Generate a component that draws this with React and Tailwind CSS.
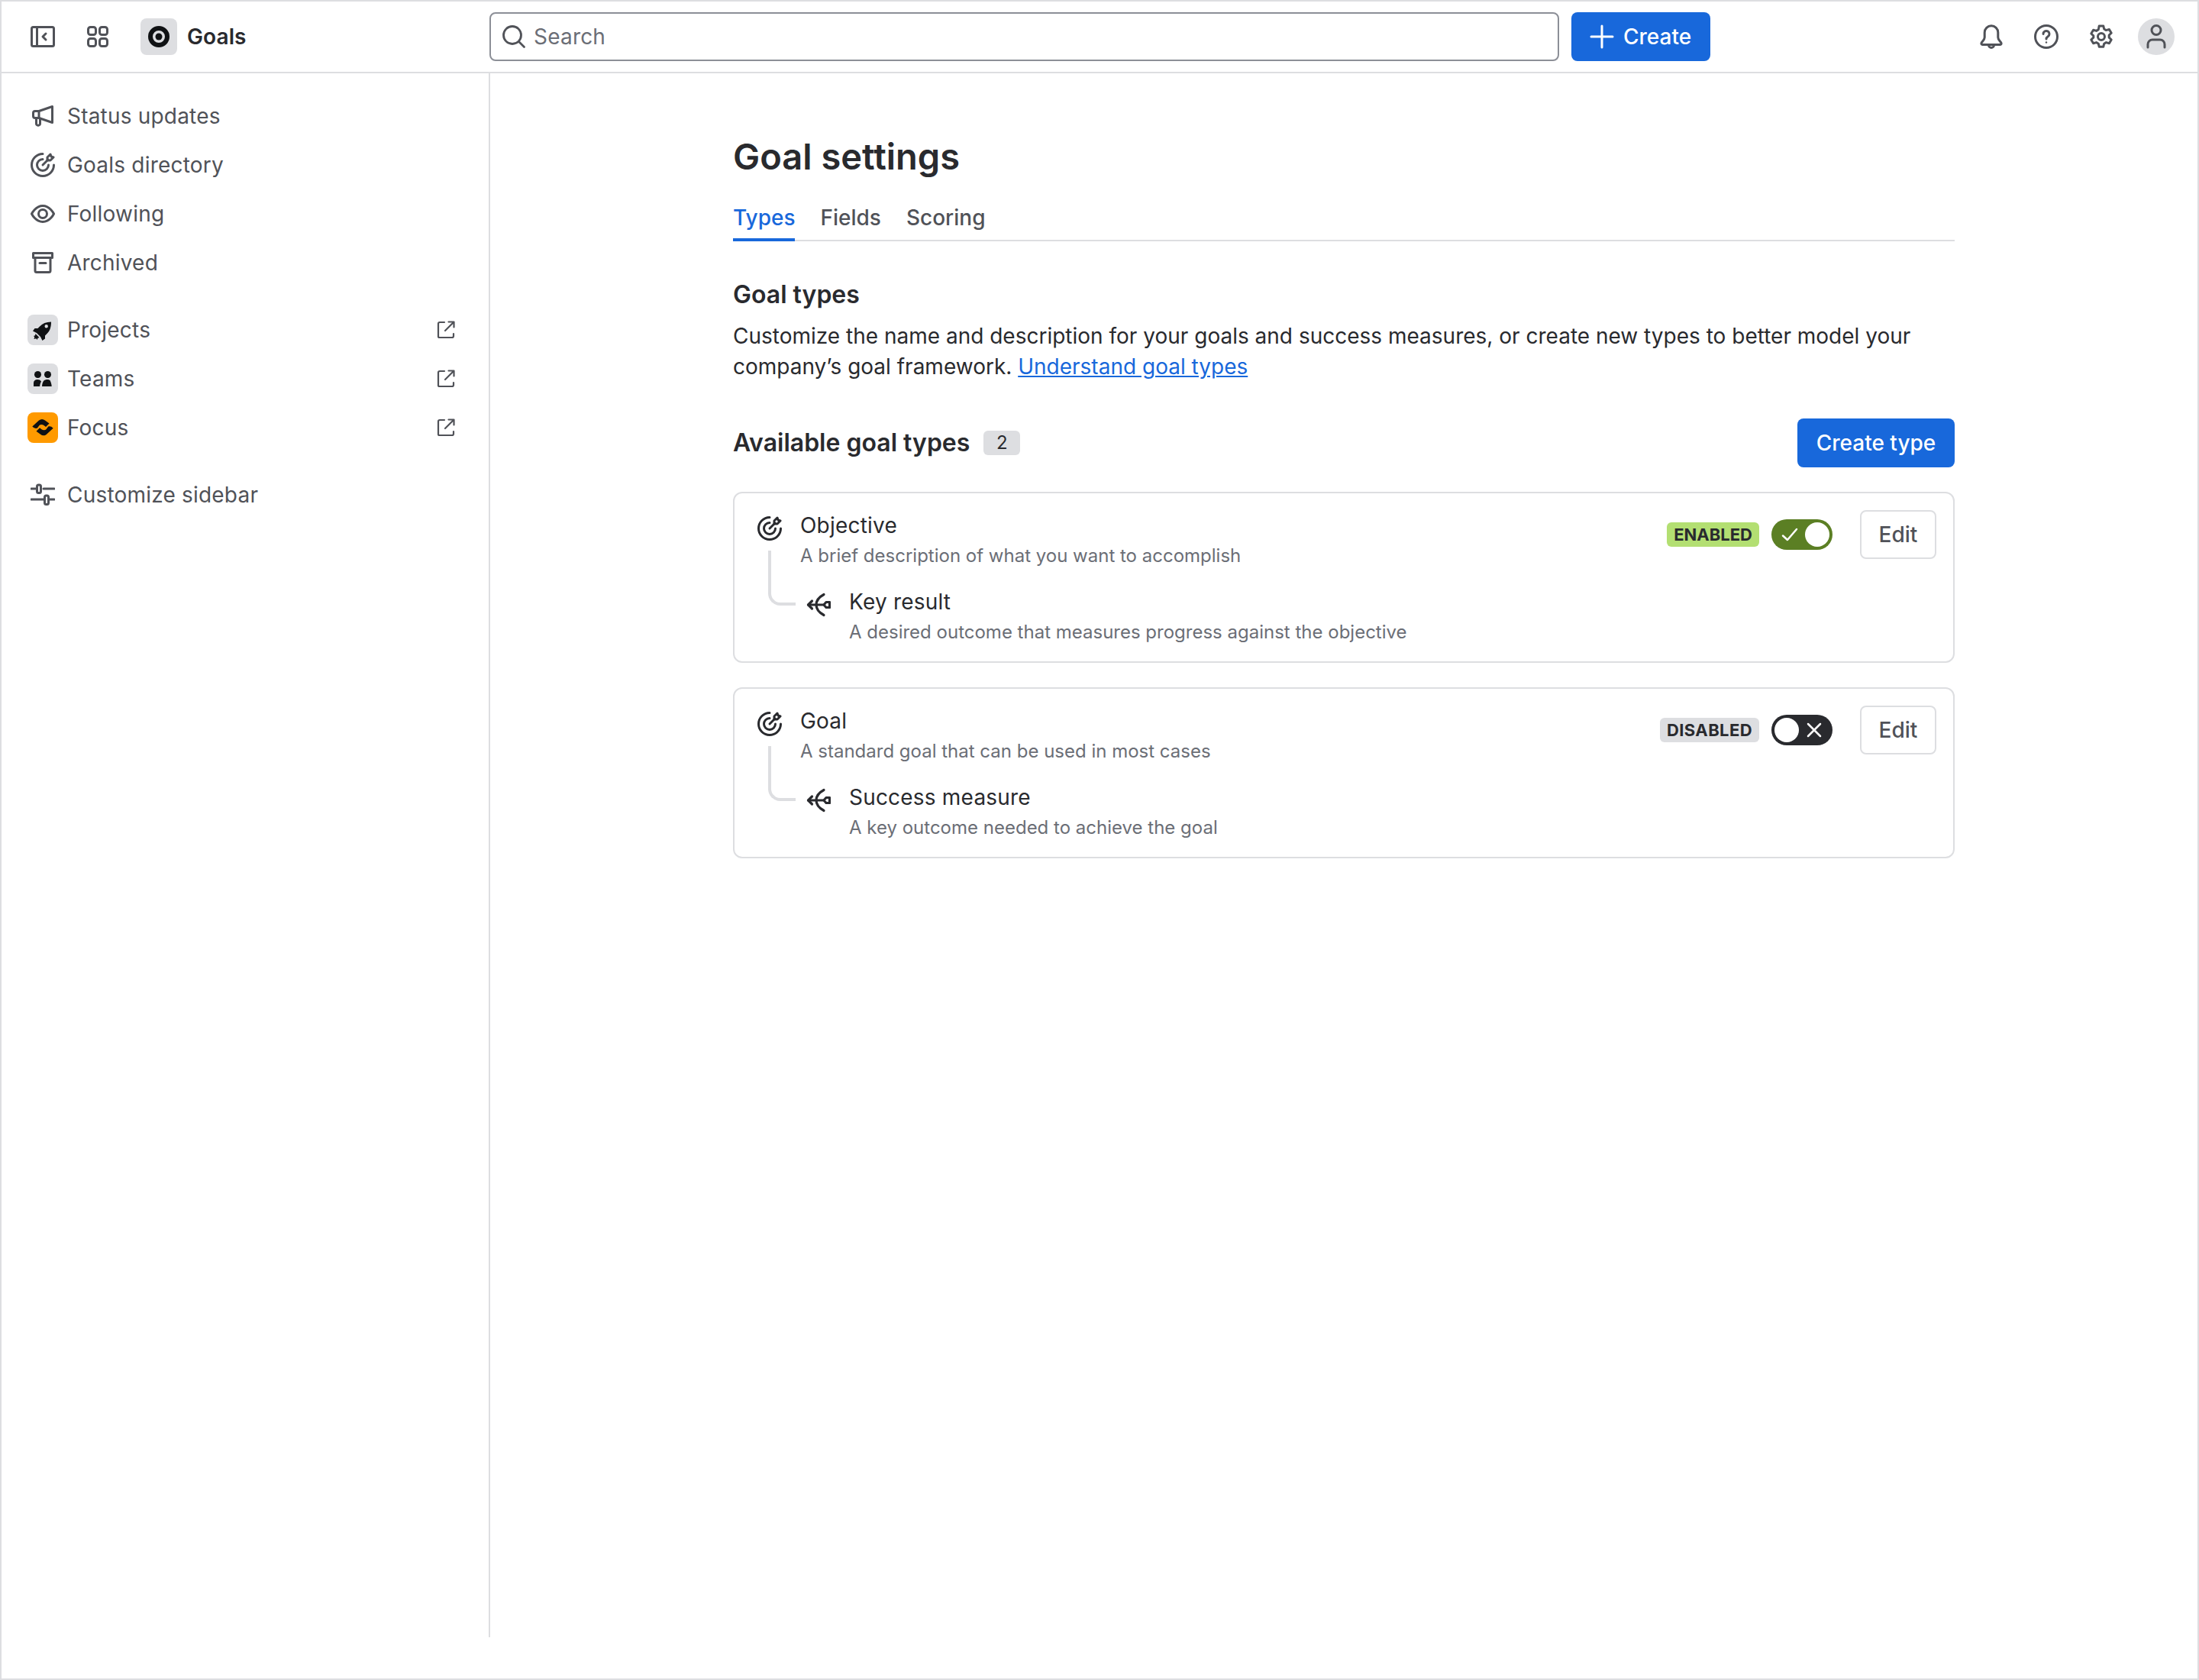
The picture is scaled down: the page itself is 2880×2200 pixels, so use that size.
import React from "react";

const Svg = ({ children, className = "w-8 h-8", box = "0 0 16 16", color = "#505258", sw = 1.5 }) => (
  <svg viewBox={box} className={`${className} shrink-0`} fill="none" stroke={color} strokeWidth={sw} strokeLinecap="round" strokeLinejoin="round">
    {children}
  </svg>
);

const PanelIcon = () => (
  <Svg>
    <rect x="0.75" y="1.75" width="14.5" height="12.5" rx="1" />
    <path d="M4.25 1.75v12.5" />
    <path d="M10 6 8 8l2 2" />
  </Svg>
);
const AppsIcon = () => (
  <Svg>
    <rect x="1.75" y="1.75" width="5" height="5" rx="1.5" />
    <rect x="9.25" y="1.75" width="5" height="5" rx="1.5" />
    <rect x="1.75" y="9.25" width="5" height="5" rx="1.5" />
    <rect x="9.25" y="9.25" width="5" height="5" rx="1.5" />
  </Svg>
);
const MegaphoneIcon = () => (
  <Svg>
    <path d="M14.25 1.75v10.5L5.5 9.25H3A1.25 1.25 0 0 1 1.75 8V6A1.25 1.25 0 0 1 3 4.75h2.5z" />
    <path d="M5.5 4.75v4.5" />
    <path d="M3.75 9.25V13a1.1 1.1 0 0 0 1.1 1.1h.3a1.1 1.1 0 0 0 1.1-1.1V9.6" />
  </Svg>
);
const TargetIcon = ({ color = "#505258" }) => (
  <Svg color={color}>
    <path d="M8 .75A7.25 7.25 0 1 0 15.25 8" />
    <path d="M8 4.25A3.75 3.75 0 1 0 11.75 8" />
    <path d="M8 8l3.5-3.5" />
    <path d="M11 5V3l2-2 .5 1.5L15 3l-2 2z" />
  </Svg>
);
const EyeIcon = () => (
  <Svg>
    <path d="M.75 8S3.25 2.75 8 2.75 15.25 8 15.25 8 12.75 13.25 8 13.25.75 8 .75 8z" />
    <circle cx="8" cy="8" r="2.75" />
  </Svg>
);
const ArchiveIcon = () => (
  <Svg>
    <path d="M1.75 1.75h12.5v3H1.75z" />
    <path d="M3 4.75v8.5a1 1 0 0 0 1 1h8a1 1 0 0 0 1-1v-8.5" />
    <path d="M6 8.25h4" />
  </Svg>
);
const SlidersIcon = () => (
  <Svg>
    <path d="M.5 4h3M8.5 4h7M.5 11h8M12.5 11h3" />
    <rect x="4.25" y="1.5" width="2.5" height="5.25" rx="1" />
    <rect x="9.25" y="8.5" width="2.5" height="5.75" rx="1" />
  </Svg>
);
const ExternalIcon = () => (
  <Svg className="w-6 h-6" box="0 0 12 12" sw={1.1}>
    <path d="M5 1H2a1 1 0 0 0-1 1v8.25a.75.75 0 0 0 .75.75H10a1 1 0 0 0 1-1V8.5" />
    <path d="M5.5 6.5 11 1M7.75.75h3.5v3.5" />
  </Svg>
);
const SearchIcon = () => (
  <Svg color="#505258" sw={1.4}>
    <circle cx="7" cy="7" r="5.75" />
    <path d="m11.25 11.25 3.5 3.5" />
  </Svg>
);
const BellIcon = () => (
  <Svg>
    <path d="M8 .9A4.4 4.4 0 0 0 3.6 5.3v3.2c0 1.6-1.6 2.6-2.1 3.7-.2.5.1 1 .6 1h11.8c.5 0 .8-.5.6-1-.5-1.1-2.1-2.1-2.1-3.7V5.3A4.4 4.4 0 0 0 8 .9z" />
    <path d="M6.25 13.5a1.75 1.75 0 0 0 3.5 0" />
  </Svg>
);
const HelpIcon = () => (
  <Svg>
    <circle cx="8" cy="8" r="7.25" />
    <path d="M6 6.25a2 2 0 1 1 3.1 1.65c-.7.45-1.1.85-1.1 1.6" />
    <circle cx="8" cy="11.75" r=".6" fill="#505258" stroke="none" />
  </Svg>
);
const GearIcon = () => (
  <Svg>
    <path d="M6.6 1h2.8l.45 2 1.35.8 2-.6 1.4 2.4-1.5 1.4v1.6l1.5 1.4-1.4 2.4-2-.6-1.35.8-.45 2H6.6l-.45-2-1.35-.8-2 .6-1.4-2.4 1.5-1.4V7.4L1.4 6l1.4-2.4 2 .6 1.35-.8z" />
    <circle cx="8" cy="8" r="2.25" />
  </Svg>
);
const PersonIcon = () => (
  <Svg>
    <circle cx="8" cy="3.75" r="3" />
    <path d="M2.5 15v-2a3 3 0 0 1 3-3h5a3 3 0 0 1 3 3v2" />
  </Svg>
);
const BowIcon = () => (
  <Svg color="#292A2E" sw={1.6}>
    <path d="M1.25 8h10.25" />
    <path d="M3.75 5.5 1.25 8l2.5 2.5" />
    <path d="M11.5 1.25C8.25 3 6.5 5.5 6.5 8s1.75 5 5 6.75" />
    <path d="M11.5 8 13 6.25h2.25v3.5H13z" />
  </Svg>
);

const GoalsLogo = () => (
  <svg viewBox="0 0 48 48" className="w-12 h-12">
    <circle cx="24" cy="24" r="11" fill="none" stroke="#101214" strokeWidth="6" />
    <circle cx="24" cy="24" r="4.5" fill="#101214" />
  </svg>
);
const RocketLogo = () => (
  <svg viewBox="0 0 40 40" className="w-10 h-10" fill="#101214">
    <path fillRule="evenodd" d="M31 9.500c-6.500 0-11.500 2-15 6L13.500 18H9.500L7 21.500l5 2.500 5 5 2.500 5L23 31.500v-4l2.500-2.500c4-3.500 5.500-9 5.500-15.500zM24.700 13a2.200 2.200 0 1 1 0 4.400 2.200 2.200 0 0 1 0-4.400z" />
    <path d="M10.500 25l5 5-2 .8-.8 2.200-1.500-1.700-2.700.7.7-2.700-1.200-1.300 2-.8z" />
  </svg>
);
const TeamsLogo = () => (
  <svg viewBox="0 0 40 40" className="w-10 h-10" fill="#101214">
    <circle cx="13.500" cy="14.500" r="4.500" />
    <circle cx="26.500" cy="14.500" r="4.500" />
    <path d="M8 30v-4.500C8 22.500 10 21 13 21c2.400 0 4 .8 5 2.500-1 1.800-1.700 4-1.900 6.500z" />
    <path d="M19 30c.2-3.500 1-6 2.500-7.500C22.500 21.500 24 21 26 21c1.800 0 3 .5 3.700 1.500.9 1.700 1.800 4.500 2 7.500z" />
  </svg>
);
const FOCUS_BAND = "M6.300 18.500 15 10.500c2.500-2 5.500-2 8 0l5.500 4-4.500 4.500-2.500-2c-2-1.500-4.500-1.500-6 0L13 20.500c-2 1-4.500 .2-6.700-2z";
const FocusLogo = () => (
  <svg viewBox="0 0 40 40" className="w-10 h-10" fill="#101214">
    <path d={FOCUS_BAND} />
    <path transform="rotate(180 20 19.600)" d={FOCUS_BAND} />
  </svg>
);

const NavRow = ({ icon, label, external, tile }) => (
  <div className="flex h-16 items-center pr-[38px]">
    <div className={`flex w-[86px] shrink-0 ${tile ? "pl-[34px]" : "pl-[38px]"}`}>
      {tile ? <div className={`h-10 w-10 rounded-lg overflow-hidden ${tile}`}>{icon}</div> : icon}
    </div>
    <span className="flex-1 text-[28px] leading-10 tracking-[0.2px] text-[#505258]">{label}</span>
    {external && <ExternalIcon />}
    {external && <span className="w-[6px]" />}
  </div>
);

const Connector = () => (
  <div className="-mt-[47px] h-[72px] w-9 shrink-0 rounded-bl-2xl border-b-4 border-l-4 border-[#DDDEE1]" />
);

const Toggle = ({ on }) => (
  <div className={`flex h-10 w-20 items-center justify-between rounded-full px-1 ${on ? "bg-[#5B7F24]" : "bg-[#292A2E]"}`}>
    {on ? (
      <>
        <svg viewBox="0 0 24 24" className="ml-[8px] h-6 w-6" fill="none" stroke="#fff" strokeWidth="2.5" strokeLinecap="round" strokeLinejoin="round">
          <path d="M3 13.5 9 19 21 5" />
        </svg>
        <span className="h-8 w-8 rounded-full bg-white" />
      </>
    ) : (
      <>
        <span className="h-8 w-8 rounded-full bg-white" />
        <svg viewBox="0 0 24 24" className="mr-[8px] h-6 w-6" fill="none" stroke="#fff" strokeWidth="2.5" strokeLinecap="round">
          <path d="M4 4l16 16M20 4 4 20" />
        </svg>
      </>
    )}
  </div>
);

const GoalCard = ({ name, desc, subName, subDesc, on }) => (
  <div className="flex rounded-xl border-2 border-[#DDDEE1] pb-[18px] pl-[30px] pr-[22px] pt-[22px]">
    <div className="flex-1">
      <div className="flex gap-6">
        <div className="pt-2"><TargetIcon color="#292A2E" /></div>
        <div>
          <div className="text-[28px] leading-10 tracking-[0.2px] text-[#292A2E]">{name}</div>
          <div className="text-[24px] leading-10 text-[#6B6E76]">{desc}</div>
        </div>
      </div>
      <div className="mt-[20px] flex">
        <div className="w-[14px] shrink-0" />
        <Connector />
        <div className="ml-[14px] flex gap-6">
          <div className="pt-2"><BowIcon /></div>
          <div>
            <div className="text-[28px] leading-10 tracking-[0.2px] text-[#292A2E]">{subName}</div>
            <div className="text-[24px] leading-10 text-[#6B6E76]">{subDesc}</div>
          </div>
        </div>
      </div>
    </div>
    <div className="flex h-16 items-center">
      <span className={`flex h-8 items-center rounded-md px-[9px] text-[22px] font-bold text-[#292A2E] ${on ? "bg-[#B3DF72]" : "bg-[#DDDEE1] tracking-[0.4px]"}`}>
        {on ? "ENABLED" : "DISABLED"}
      </span>
      <div className="ml-4 mr-9"><Toggle on={on} /></div>
      <button className="flex h-16 w-[100px] items-center justify-center rounded-lg border-2 border-[#DDDEE1] text-[28px] font-medium text-[#505258]">
        Edit
      </button>
    </div>
  </div>
);

export default function App() {
  return (
    <div className="flex h-[2200px] w-[2880px] flex-col border-2 border-[#DDDEE1] bg-white [font-family:Inter,sans-serif]">
      <header className="flex h-[94px] shrink-0 items-center border-b-2 border-[#DDDEE1]">
        <div className="flex w-[639px] shrink-0 items-center pl-[38px]">
          <PanelIcon />
          <div className="ml-10"><AppsIcon /></div>
          <div className="ml-10 h-12 w-12 rounded-lg bg-[#DDDEE1]"><GoalsLogo /></div>
          <span className="ml-[13px] text-[28px] font-semibold tracking-[0.1px] text-[#292A2E]">Goals</span>
        </div>
        <div className="flex h-16 w-[1401px] items-center rounded-lg border-2 border-[#8C8F97] pl-[14px]">
          <SearchIcon />
          <span className="ml-[10px] text-[28px] tracking-[0.2px] text-[#6B6E76]">Search</span>
        </div>
        <button className="ml-4 flex h-16 w-[182px] items-center rounded-lg bg-[#1868DB] pl-[24px] text-[28px] font-medium text-white">
          <svg viewBox="0 0 32 32" className="h-8 w-8" fill="none" stroke="#fff" strokeWidth="3" strokeLinecap="round"><path d="M16 2v28M2 16h28" /></svg>
          <span className="ml-[12px]">Create</span>
        </button>
        <div className="ml-auto flex items-center gap-2 pr-[22px]">
          <div className="flex w-16 justify-center"><BellIcon /></div>
          <div className="flex w-16 justify-center"><HelpIcon /></div>
          <div className="flex w-16 justify-center"><GearIcon /></div>
          <div className="flex w-16 justify-center">
            <div className="flex h-12 w-12 items-center justify-center rounded-full bg-[#DDDEE1]"><PersonIcon /></div>
          </div>
        </div>
      </header>
      <div className="flex h-[2048px] shrink-0">
        <aside className="w-[640px] shrink-0 border-r-2 border-[#DDDEE1] pt-6">
          <NavRow icon={<MegaphoneIcon />} label="Status updates" />
          <NavRow icon={<TargetIcon />} label="Goals directory" />
          <NavRow icon={<EyeIcon />} label="Following" />
          <NavRow icon={<ArchiveIcon />} label="Archived" />
          <div className="h-6" />
          <NavRow tile="bg-[#DDDEE1]" icon={<RocketLogo />} label="Projects" external />
          <NavRow tile="bg-[#DDDEE1]" icon={<TeamsLogo />} label="Teams" external />
          <NavRow tile="bg-[#FF9A00]" icon={<FocusLogo />} label="Focus" external />
          <div className="h-6" />
          <NavRow icon={<SlidersIcon />} label="Customize sidebar" />
        </aside>
        <main className="flex-1">
          <div className="mx-auto w-[1600px] pt-[81px]">
            <h1 className="text-[47px] font-semibold leading-14 text-[#292A2E]">Goal settings</h1>
            <div className="mt-8 flex gap-[33px] border-b-2 border-[#DDDEE1]">
              <div className="-mb-[2px] border-b-4 border-[#1868DB] pb-[7px] text-[28px] font-medium leading-10 text-[#1868DB]">Types</div>
              <div className="-mb-[2px] pb-[11px] text-[28px] font-medium leading-10 text-[#505258]">Fields</div>
              <div className="-mb-[2px] pb-[11px] text-[28px] font-medium leading-10 text-[#505258]">Scoring</div>
            </div>
            <h2 className="mt-[50px] text-[32px] font-semibold leading-10 text-[#292A2E]">Goal types</h2>
            <p className="mt-[14px] text-[28px] leading-10 text-[#292A2E]">
              Customize the name and description for your goals and success measures, or create new types to better model your company’s goal framework.{" "}
              <span className="text-[#1868DB] underline">Understand goal types</span>
            </p>
            <div className="mt-[48px] flex h-16 items-center justify-between">
              <div className="flex items-center gap-[18px]">
                <h3 className="text-[32px] font-semibold leading-10 text-[#292A2E]">Available goal types</h3>
                <span className="flex h-8 w-12 items-center justify-center rounded-md bg-[#DDDEE1] text-[24px] text-[#292A2E]">2</span>
              </div>
              <button className="flex h-16 w-[206px] items-center justify-center rounded-lg bg-[#1868DB] text-[28px] font-medium text-white">Create type</button>
            </div>
            <div className="mt-8 flex flex-col gap-8">
              <GoalCard name="Objective" desc="A brief description of what you want to accomplish" subName="Key result" subDesc="A desired outcome that measures progress against the objective" on />
              <GoalCard name="Goal" desc="A standard goal that can be used in most cases" subName="Success measure" subDesc="A key outcome needed to achieve the goal" />
            </div>
          </div>
        </main>
      </div>
    </div>
  );
}
